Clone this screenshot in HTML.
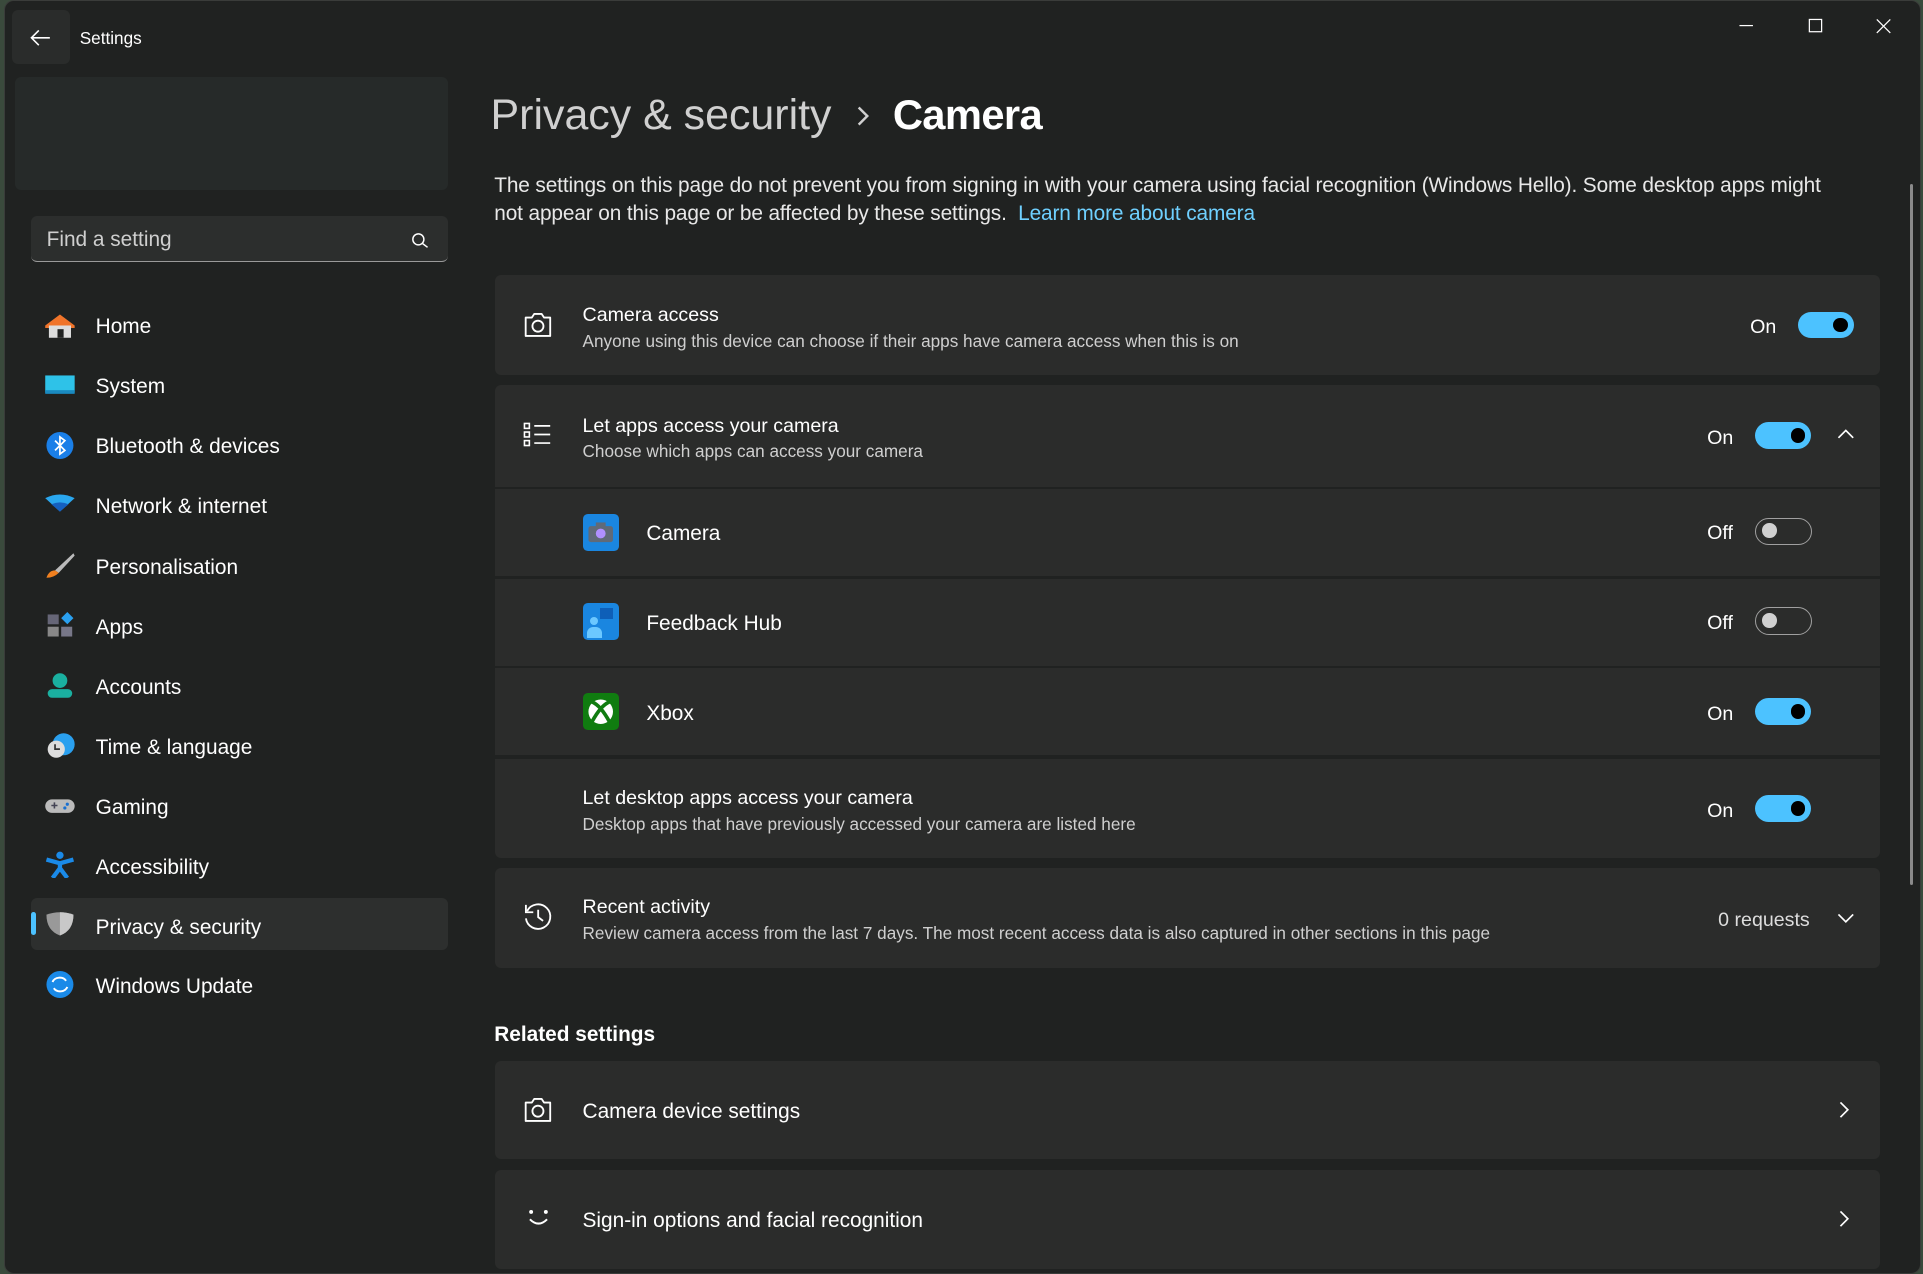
<!DOCTYPE html>
<html><head><meta charset="utf-8"><style>
html,body{margin:0;padding:0;background:#3a4a3c;overflow:hidden;width:1923px;height:1274px}
#w{position:absolute;left:0;top:0;width:1568px;height:1039px;zoom:1.2264;font-family:"Segoe UI","Liberation Sans",sans-serif;color:#fff;overflow:hidden}
.win{position:absolute;left:3px;top:0;width:1562px;height:1037px;background:#202221;border:1px solid #3a3c3a;border-radius:8px;overflow:hidden}
.a{position:absolute}
.nav{position:absolute;left:78px;font-size:17px;color:#fff;margin-top:2px}
.ic{position:absolute;left:36px;width:26px;height:22px}
.card{position:absolute;left:404px;width:1129px;background:#2b2c2b;border-radius:5px}
.t1{position:absolute;left:475px;font-size:16px;color:#fff;margin-top:2px}
.t2{position:absolute;left:475px;font-size:14px;color:#cfcfcf;margin-top:2px}
.tog{position:absolute;width:46px;height:22px;border-radius:12px;background:#4cc2ff}
.tog::after{content:"";position:absolute;right:5px;top:5px;width:12px;height:12px;border-radius:50%;background:#000}
.off{background:transparent;border:1px solid #a0a0a0;width:45px;height:21px}
.off::after{left:5px;right:auto;top:4px;background:#d0d0d0}
.lbl{position:absolute;font-size:16px;color:#fff;margin-top:2px}
</style></head><body><div id="w">
<div class="win">
</div>
<div class="a" style="left:10px;top:8px;width:47px;height:44px;background:#2a2c2b;border-radius:5px"></div>
<svg class="a" style="left:24px;top:23px" width="18" height="16"><path d="M17 8H2M8 2L2 8l6 6" stroke="#fff" stroke-width="1.3" fill="none"/></svg>
<div class="a" style="left:65px;top:23px;font-size:14px">Settings</div>
<svg class="a" style="left:1416px;top:14px" width="130" height="16"><path d="M2 7h11" stroke="#fff" stroke-width="1"/><rect x="59" y="2" width="10" height="10" stroke="#fff" fill="none" stroke-width="1"/><path d="M114 2l11 11M125 2l-11 11" stroke="#fff" stroke-width="1"/></svg>
<div class="a" style="left:12px;top:63px;width:353px;height:92px;background:#262a29;border-radius:5px"></div>
<div class="a" style="left:25px;top:176px;width:340px;height:38px;background:#2c2e2d;border-radius:5px;border-bottom:1px solid #9a9a9a;box-sizing:border-box"></div>
<div class="a" style="left:38px;top:186px;font-size:17px;color:#cfcfcf">Find a setting</div>
<svg class="a" style="left:335px;top:189px" width="16" height="14"><circle cx="6" cy="6" r="4.5" stroke="#fff" fill="none" stroke-width="1.2"/><path d="M9.5 9.5l4 3" stroke="#fff" stroke-width="1.2"/></svg>
<div class="a" style="left:25px;top:732px;width:340px;height:43px;background:#2d2f2e;border-radius:5px"></div>
<div class="a" style="left:25px;top:744px;width:4px;height:18px;background:#4cc2ff;border-radius:2px"></div>
<svg class="ic" style="top:254px"><path d="M1 11L13 2l12 9v2H1z" fill="#f0742a"/><rect x="4" y="11" width="18" height="10" fill="#ddd"/><rect x="11" y="14" width="5" height="7" fill="#202221"/></svg>
<div class="nav" style="top:255px">Home</div>
<svg class="ic" style="top:304px"><rect x="1" y="2" width="24" height="14" fill="#2ec2e8"/><rect x="1" y="14" width="24" height="3" fill="#1a8ac0"/></svg>
<div class="nav" style="top:304px">System</div>
<svg class="ic" style="top:352px"><ellipse cx="13" cy="11" rx="11" ry="11" fill="#1a7fe8"/><path d="M9 7l8 8-4 3V4l4 3-8 8" stroke="#fff" stroke-width="1.4" fill="none"/></svg>
<div class="nav" style="top:353px">Bluetooth &amp; devices</div>
<svg class="ic" style="top:401px"><path d="M1 5Q13-1 25 5L13 16z" fill="#2aa7ef"/><path d="M6 10Q13 7 20 10l-7 6z" fill="#1560c0"/></svg>
<div class="nav" style="top:402px">Network &amp; internet</div>
<svg class="ic" style="top:450px"><path d="M24 1L9 15l3 2L25 3z" fill="#bbb"/><path d="M9 15q-5 0-7 6 6 0 10-4z" fill="#f08020"/></svg>
<div class="nav" style="top:451px">Personalisation</div>
<svg class="ic" style="top:499px"><rect x="3" y="2" width="9" height="8" fill="#667"/><rect x="3" y="12" width="9" height="8" fill="#888"/><rect x="14" y="12" width="9" height="8" fill="#778"/><path d="M19 0l5 5-5 5-5-5z" fill="#2aa0ef"/></svg>
<div class="nav" style="top:500px">Apps</div>
<svg class="ic" style="top:548px"><circle cx="13" cy="7" r="6" fill="#1ab0a0"/><rect x="3" y="14" width="20" height="7" rx="3.5" fill="#1ab0a0"/></svg>
<div class="nav" style="top:549px">Accounts</div>
<svg class="ic" style="top:597px"><circle cx="16" cy="10" r="9" fill="#2aa0ef"/><circle cx="10" cy="14" r="7" fill="#ddd"/><path d="M9 10v4h4" stroke="#333" stroke-width="1.4" fill="none"/></svg>
<div class="nav" style="top:598px">Time &amp; language</div>
<svg class="ic" style="top:646px"><rect x="1" y="6" width="24" height="11" rx="5.5" fill="#bbb"/><path d="M6 11h5M8.5 8.5v5" stroke="#445" stroke-width="1.3"/><circle cx="19" cy="10" r="1.3" fill="#1a70d0"/><circle cx="17" cy="13" r="1.3" fill="#1a70d0"/></svg>
<div class="nav" style="top:647px">Gaming</div>
<svg class="ic" style="top:694px"><circle cx="13" cy="3.5" r="3" fill="#1a8ae8"/><path d="M2 7l11 3 11-3M13 9v5l-6 8M13 14l6 8" stroke="#1a8ae8" stroke-width="3.5" fill="none"/></svg>
<div class="nav" style="top:696px">Accessibility</div>
<svg class="ic" style="top:743px"><path d="M2 3Q13-1 24 3q0 13-11 17Q2 16 2 3z" fill="#999"/><path d="M13 1v19Q24 16 24 3 19 1 13 1z" fill="#c8c8c8"/></svg>
<div class="nav" style="top:745px">Privacy &amp; security</div>
<svg class="ic" style="top:792px"><circle cx="13" cy="11" r="11" fill="#1a8ae8"/><path d="M7 9a6 5 0 0 1 11-1M19 13a6 5 0 0 1-11 1" stroke="#fff" stroke-width="1.6" fill="none"/></svg>
<div class="nav" style="top:793px">Windows Update</div>
<div class="a" style="left:400px;top:74px;font-size:35px;color:#d0d0d0">Privacy &amp; security</div>
<svg class="a" style="left:697px;top:86px" width="14" height="18"><path d="M3 2l7 7-7 7" stroke="#d0d0d0" stroke-width="2" fill="none"/></svg>
<div class="a" style="left:728px;top:74px;font-size:34px;font-weight:bold;letter-spacing:-0.5px">Camera</div>
<div class="a" style="left:403px;top:140px;width:1100px;font-size:17px;line-height:23px;color:#e8e8e8;letter-spacing:-0.1px">The settings on this page do not prevent you from signing in with your camera using facial recognition (Windows Hello). Some desktop apps might not appear on this page or be affected by these settings.&nbsp; <span style="color:#6fd0ff">Learn more about camera</span></div>
<div class="card" style="top:224px;height:82px"></div>
<svg class="a" style="left:426px;top:252px" width="26" height="26"><path d="M3 7h5l2-3h6l2 3h5v15H3z" stroke="#fff" stroke-width="1.5" fill="none" stroke-linejoin="round"/><circle cx="13" cy="14" r="4.5" stroke="#fff" stroke-width="1.5" fill="none"/></svg>
<div class="t1" style="top:246px">Camera access</div>
<div class="t2" style="top:268px">Anyone using this device can choose if their apps have camera access when this is on</div>
<div class="lbl" style="left:1427px;top:256px">On</div><div class="tog" style="left:1466px;top:254px"></div>
<div class="card" style="top:314px;height:83px;border-radius:5px 5px 0 0"></div>
<svg class="a" style="left:426px;top:343px" width="26" height="24"><rect x="2" y="2" width="4" height="4" stroke="#fff" fill="none" stroke-width="1.3"/><rect x="2" y="9" width="4" height="4" stroke="#fff" fill="none" stroke-width="1.3"/><rect x="2" y="16" width="4" height="4" stroke="#fff" fill="none" stroke-width="1.3"/><path d="M10 4h13M10 11h13M10 18h13" stroke="#fff" stroke-width="1.4"/></svg>
<div class="t1" style="top:336px">Let apps access your camera</div>
<div class="t2" style="top:358px">Choose which apps can access your camera</div>
<div class="lbl" style="left:1392px;top:346px">On</div><div class="tog" style="left:1431px;top:344px"></div>
<svg class="a" style="left:1497px;top:349px" width="16" height="10"><path d="M2 8l6-6 6 6" stroke="#fff" stroke-width="1.4" fill="none"/></svg>
<div class="card" style="top:399px;height:71px;border-radius:0"></div>
<div class="a" style="left:475px;top:419px;width:30px;height:30px;background:#1a86e0;border-radius:4px"></div>
<svg class="a" style="left:478px;top:424px" width="24" height="20"><rect x="2" y="5" width="20" height="13" rx="2" fill="#606a78"/><rect x="8" y="2" width="8" height="4" fill="#606a78"/><circle cx="12" cy="11" r="4" fill="#b090ff"/></svg>
<div class="a" style="left:527px;top:426px;font-size:17px">Camera</div>
<div class="lbl" style="left:1392px;top:424px">Off</div><div class="tog off" style="left:1431px;top:422px"></div>
<div class="card" style="top:472px;height:71px;border-radius:0"></div>
<div class="a" style="left:475px;top:492px;width:30px;height:30px;background:#1a86e0;border-radius:4px;overflow:hidden"><div class="a" style="left:14px;top:4px;width:11px;height:9px;background:#0e5fb8"></div><div class="a" style="left:6px;top:11px;width:7px;height:7px;border-radius:50%;background:#6cc8ff"></div><div class="a" style="left:4px;top:19px;width:12px;height:9px;border-radius:5px 5px 0 0;background:#6cc8ff"></div></div>
<div class="a" style="left:527px;top:499px;font-size:17px">Feedback Hub</div>
<div class="lbl" style="left:1392px;top:497px">Off</div><div class="tog off" style="left:1431px;top:495px"></div>
<div class="card" style="top:545px;height:71px;border-radius:0"></div>
<div class="a" style="left:475px;top:565px;width:30px;height:30px;background:#107c10;border-radius:4px"></div>
<svg class="a" style="left:478px;top:568px" width="24" height="24"><circle cx="12" cy="12" r="10" fill="#fff"/><path d="M5 4q7 3 14 16M19 4Q12 7 5 20" stroke="#107c10" stroke-width="3" fill="none"/></svg>
<div class="a" style="left:527px;top:572px;font-size:17px">Xbox</div>
<div class="lbl" style="left:1392px;top:571px">On</div><div class="tog" style="left:1431px;top:569px"></div>
<div class="card" style="top:619px;height:81px;border-radius:0 0 5px 5px"></div>
<div class="t1" style="top:640px">Let desktop apps access your camera</div>
<div class="t2" style="top:662px">Desktop apps that have previously accessed your camera are listed here</div>
<div class="lbl" style="left:1392px;top:650px">On</div><div class="tog" style="left:1431px;top:648px"></div>
<div class="card" style="top:708px;height:81px"></div>
<svg class="a" style="left:425px;top:734px" width="28" height="28"><path d="M5 9a10 10 0 1 1-1 6" stroke="#fff" stroke-width="1.5" fill="none"/><path d="M4 4v6h6" stroke="#fff" stroke-width="1.5" fill="none"/><path d="M14 8v6l4 3" stroke="#fff" stroke-width="1.5" fill="none"/></svg>
<div class="t1" style="top:729px">Recent activity</div>
<div class="t2" style="top:751px">Review camera access from the last 7 days. The most recent access data is also captured in other sections in this page</div>
<div class="lbl" style="left:1401px;top:739px;color:#ddd">0 requests</div>
<svg class="a" style="left:1497px;top:744px" width="16" height="10"><path d="M2 2l6 6 6-6" stroke="#fff" stroke-width="1.4" fill="none"/></svg>
<div class="a" style="left:403px;top:834px;font-size:17px;font-weight:bold">Related settings</div>
<div class="card" style="top:865px;height:80px"></div>
<svg class="a" style="left:426px;top:892px" width="26" height="26"><path d="M3 7h5l2-3h6l2 3h5v15H3z" stroke="#fff" stroke-width="1.5" fill="none" stroke-linejoin="round"/><circle cx="13" cy="14" r="4.5" stroke="#fff" stroke-width="1.5" fill="none"/></svg>
<div class="a" style="left:475px;top:897px;font-size:17px">Camera device settings</div>
<svg class="a" style="left:1499px;top:897px" width="10" height="16"><path d="M2 2l6 6-6 6" stroke="#fff" stroke-width="1.4" fill="none"/></svg>
<div class="card" style="top:954px;height:81px"></div>
<svg class="a" style="left:428px;top:984px" width="22" height="18"><circle cx="5" cy="4" r="1.6" fill="#fff"/><circle cx="17" cy="4" r="1.6" fill="#fff"/><path d="M4 10q7 7 14 0" stroke="#fff" stroke-width="1.6" fill="none"/></svg>
<div class="a" style="left:475px;top:986px;font-size:17px">Sign-in options and facial recognition</div>
<svg class="a" style="left:1499px;top:986px" width="10" height="16"><path d="M2 2l6 6-6 6" stroke="#fff" stroke-width="1.4" fill="none"/></svg>
<div class="a" style="left:1557px;top:150px;width:3px;height:572px;background:#8a8a8a;border-radius:2px"></div>
</div></body></html>
